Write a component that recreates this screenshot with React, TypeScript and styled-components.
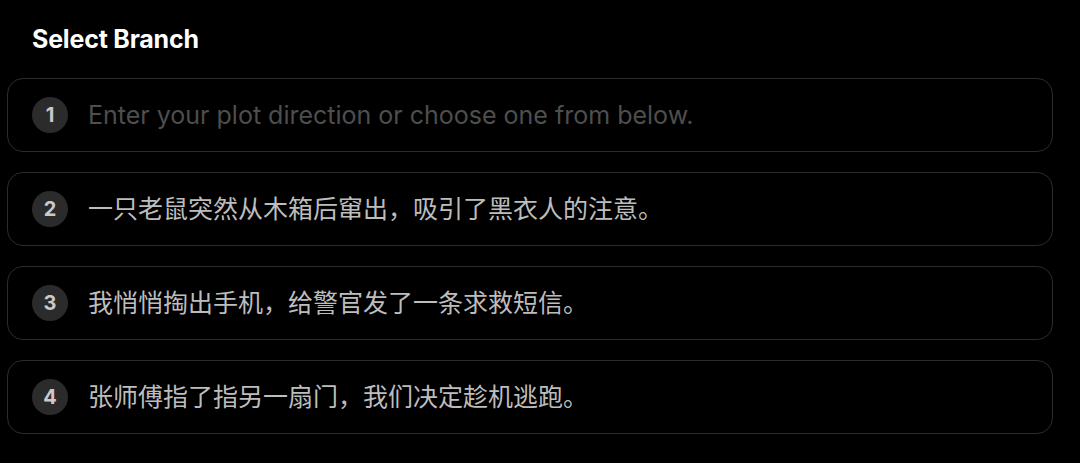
import React from 'react';
import styled, {createGlobalStyle} from 'styled-components';

const GlobalStyle = createGlobalStyle`
	html, body {
		margin: 0;
		padding: 0;
		background: #000;
	}
	body {
		font-family: Inter, "Noto Sans", "Noto Sans CJK SC", sans-serif;
		-webkit-font-smoothing: antialiased;
	}
`;

const Page = styled.div`
	width: 1080px;
	height: 463px;
	box-sizing: border-box;
	padding: 22px 27px 0 7px;
	background: #000;
	overflow: hidden;
`;

const Title = styled.h2`
	margin: 0 0 22px 25px;
	font-size: 25px;
	line-height: 34px;
	font-weight: 700;
	color: #fff;
	letter-spacing: -0.2px;
`;

const List = styled.div`
	display: flex;
	flex-direction: column;
	gap: 20.5px;
`;

const Card = styled.div`
	display: flex;
	align-items: center;
	gap: 20px;
	height: 73.5px;
	box-sizing: border-box;
	padding: 0 24px;
	border: 1px solid #2c2c2c;
	border-radius: 16px;
	background: #000;
`;

const Badge = styled.span`
	flex: none;
	display: flex;
	align-items: center;
	justify-content: center;
	width: 36px;
	height: 36px;
	border-radius: 50%;
	background: #2b2b2b;
	color: #cacaca;
	font-family: Inter, "Noto Sans", sans-serif;
	font-size: 20px;
	font-weight: 700;
`;

const Text = styled.span<{$placeholder?: boolean}>`
	font-family: Inter, "Noto Sans CJK SC", sans-serif;
	font-size: 25px;
	line-height: 32px;
	color: ${p => (p.$placeholder ? '#4e4e4e' : '#bdbdbd')};
	white-space: nowrap;
`;

const branches = [
	{text: 'Enter your plot direction or choose one from below.', placeholder: true},
	{text: '一只老鼠突然从木箱后窜出，吸引了黑衣人的注意。'},
	{text: '我悄悄掏出手机，给警官发了一条求救短信。'},
	{text: '张师傅指了指另一扇门，我们决定趁机逃跑。'},
];

const App = () => (
	<>
		<GlobalStyle />
		<Page>
			<Title>Select Branch</Title>
			<List>
				{branches.map((b, i) => (
					<Card key={i}>
						<Badge>{i + 1}</Badge>
						<Text $placeholder={b.placeholder}>{b.text}</Text>
					</Card>
				))}
			</List>
		</Page>
	</>
);

export default App;
